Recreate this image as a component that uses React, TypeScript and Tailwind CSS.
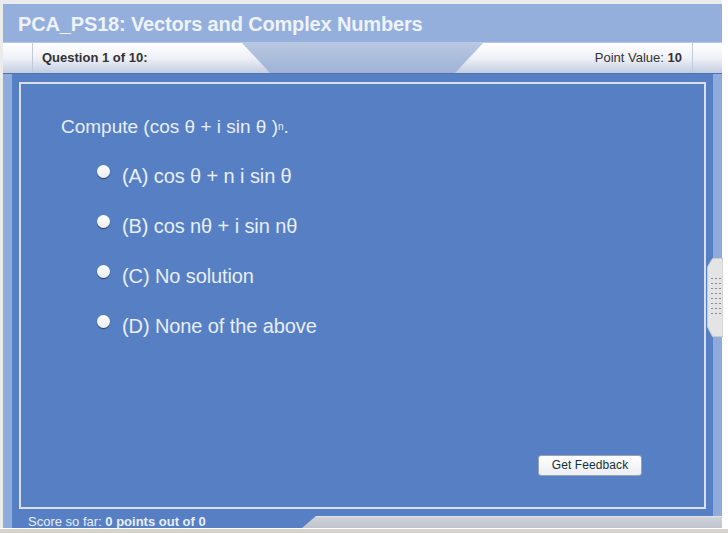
const options = [
  '(A) cos θ + n i sin θ',
  '(B) cos nθ + i sin nθ',
  '(C) No solution',
  '(D) None of the above',
];

function Grip() {
  const dots = [];
  for (let r = 0; r < 8; r++) {
    for (let c = 0; c < 3; c++) {
      dots.push(<rect key={r + '-' + c} x={4 + c * 4} y={20 + r * 5} width={2} height={1} fill="#8a8a8a" />);
    }
  }
  return (
    <svg width="16" height="79" viewBox="0 0 16 79" className="block">
      <polygon points="5.5,0.5 16,0.5 16,78.5 5.5,78.5 0.5,69 0.5,9" fill="#e4e4e4" stroke="#c9c9c9" />
      {dots}
    </svg>
  );
}

export default function App() {
  return (
    <div className="w-[728px] h-[533px] bg-white flex flex-col font-['Liberation_Sans',Arial,sans-serif]">
      <div className="w-[722px] flex-1 flex flex-col bg-[#ebebeb] pt-[4px] pl-[3px]">
        {/* title */}
        <div className="h-[38px] bg-[#94afdb] pl-[15px] pt-[9px] text-[20px] leading-[22px] tracking-[-0.15px] font-bold text-[#eef3fb]">
          PCA_PS18: Vectors and Complex Numbers
        </div>

        {/* question bar */}
        <div className="h-[31px] flex border-t border-[#b9c8e3] bg-gradient-to-b from-[#b8c7e1] to-[#9fb3d6] text-[13px] text-[#333]">
          <div className="w-[267px] flex bg-gradient-to-b from-white via-[#eef1f7] to-[#c4cee2] [clip-path:polygon(0_0,239px_0,267px_100%,0_100%)]">
            <div className="w-[30px] border-r border-[#c3cad9]" />
            <div className="pl-[9px] flex items-center font-bold">Question 1 of 10:</div>
          </div>
          <div className="flex-1" />
          <div className="w-[267px] flex justify-end bg-gradient-to-b from-white via-[#eef1f7] to-[#c4cee2] [clip-path:polygon(28px_0,100%_0,100%_100%,0_100%)]">
            <div className="pr-[10px] flex items-center">
              Point Value:&nbsp;<span className="font-bold">10</span>
            </div>
            <div className="w-[30px] border-l border-[#c3cad9]" />
          </div>
        </div>
        <div className="h-[1px] bg-[#4f72b5]" />

        {/* main */}
        <div className="relative flex-1 flex">
          <div className="w-[9px] bg-[#8fabdb]" />
          <div className="flex-1 flex flex-col bg-[#5680c3] pt-[8px] px-[7px]">
            <div className="h-[427px] flex flex-col border-2 border-[#d9dee7] text-[20px] leading-[24px] text-[#e8eef9]">
              <div className="pl-[40px] mt-[31px] text-[19px]">
                Compute (cos θ + i sin θ )<sup className="text-[10px] relative -top-[3px]">n</sup>.
              </div>
              <div className="flex flex-col gap-[26px] mt-[25px] pl-[76px]">
                {options.map((o) => (
                  <div key={o} className="flex items-start">
                    <div className="w-[13px] h-[13px] mt-[1px] rounded-full bg-gradient-to-b from-white to-[#ececec] shadow-[0_1px_1px_rgba(0,0,0,0.55)]" />
                    <div className="ml-[12px] tracking-[-0.1px]">{o}</div>
                  </div>
                ))}
              </div>
              <button className="mt-auto self-end mr-[62px] mb-[31px] w-[104px] h-[21px] rounded-[3px] border border-[#9aa3b3] bg-gradient-to-b from-white to-[#eceef2] text-[12px] leading-[19px] tracking-[0.1px] text-[#12303f]">
                Get Feedback
              </button>
            </div>
            <div className="h-[19px] pl-[9px] pt-[6px] text-[13px] leading-[13px] text-[#e8eef9]">
              Score so far: <span className="font-bold">0 points out of 0</span>
            </div>
          </div>
          <div className="w-[9px] bg-[#8fabdb]" />

          {/* bottom bar */}
          <div className="absolute left-[299px] right-0 top-[442px] h-[12px] border-t border-[#dfe2e8] bg-gradient-to-b from-[#cfd3da] to-[#bfc3cb] [clip-path:polygon(14px_0,100%_0,100%_100%,0_100%)]" />

          {/* side handle */}
          <div className="absolute left-[704px] top-[184px]">
            <Grip />
          </div>
        </div>
      </div>
      <div className="h-[5px] border-t border-white bg-[#d6d3cc]" />
    </div>
  );
}
